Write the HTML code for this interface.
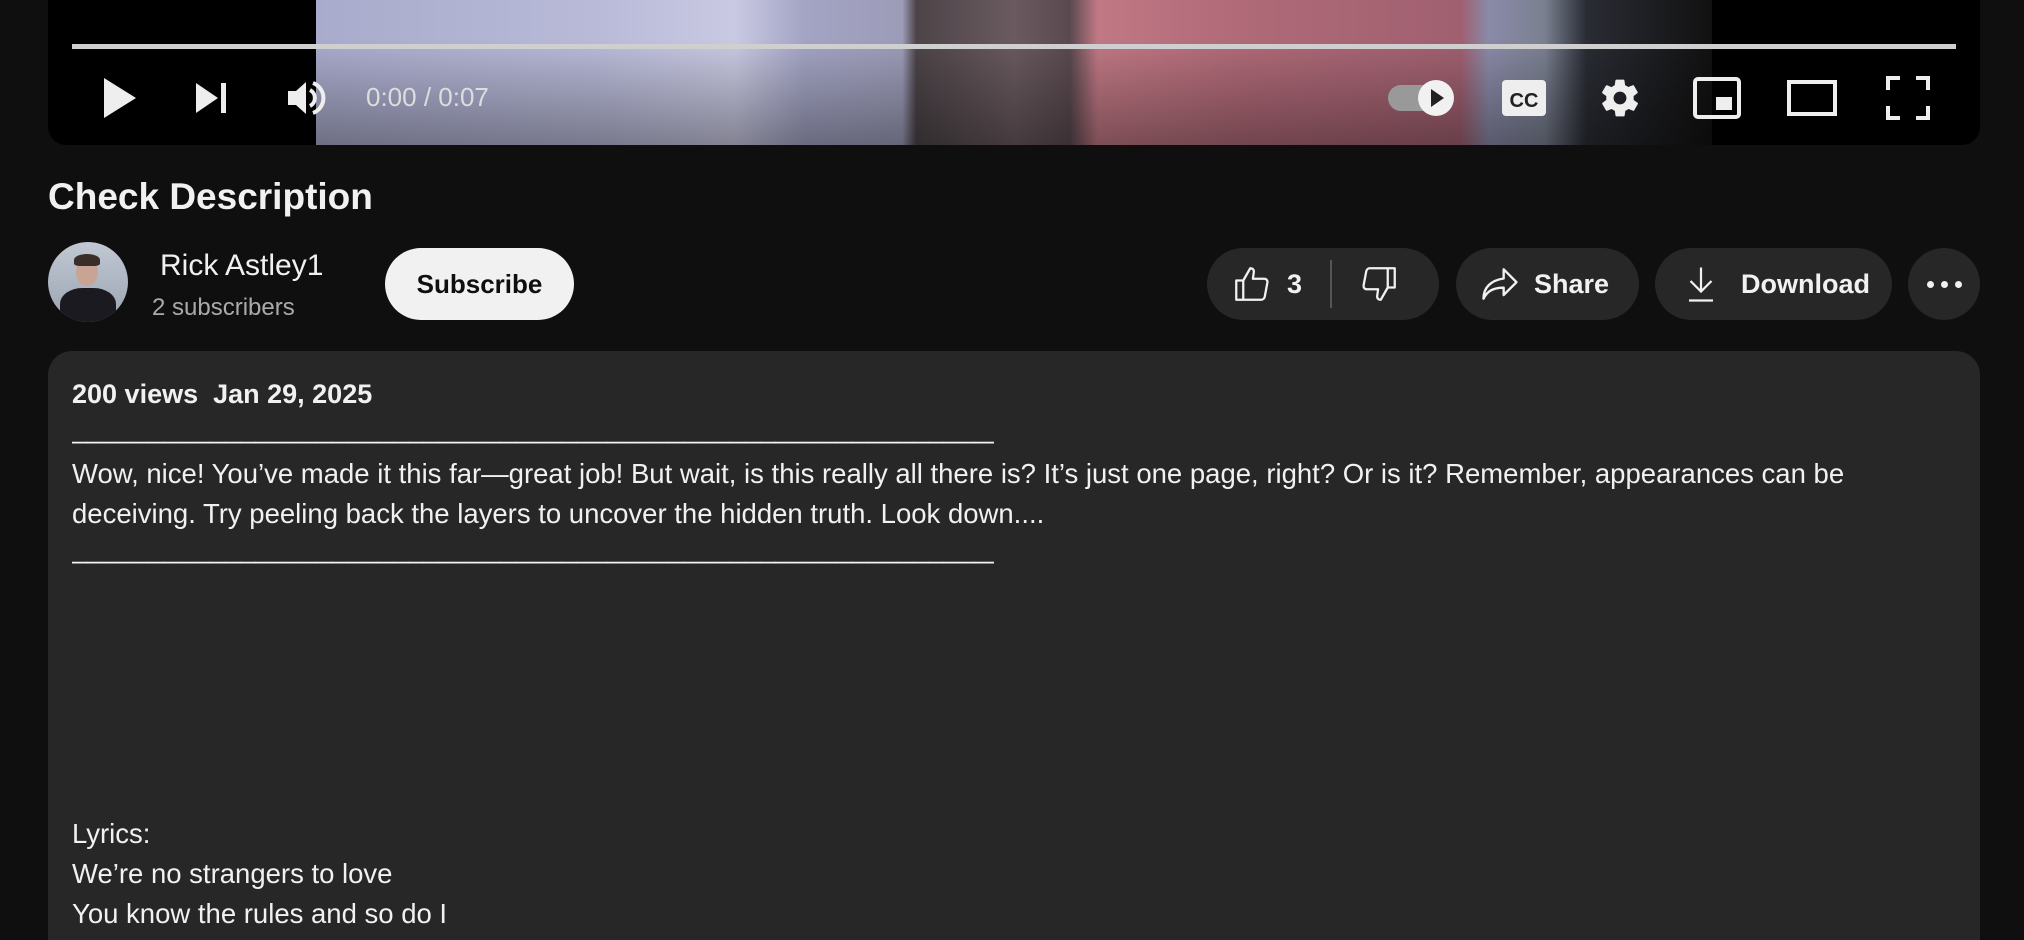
<!DOCTYPE html>
<html style="width:2024px;height:940px;overflow:hidden"><head><meta charset="utf-8"><style>
*{margin:0;padding:0;box-sizing:border-box}
body{width:2024px;height:940px;background:#0f0f0f;overflow:hidden;font-family:"Liberation Sans",Arial,sans-serif;color:#f1f1f1;position:relative}
.abs{position:absolute}
.player{left:48px;top:-20px;width:1932px;height:165px;background:#000;border-radius:0 0 18px 18px;overflow:hidden}
.btn{background:#272727;border-radius:36px;height:72px;top:248px;display:flex;align-items:center;font-size:27px;font-weight:bold}
.desc{left:48px;top:351px;width:1932px;height:589px;background:#272727;border-radius:24px 24px 0 0;padding:23px 24px;font-size:27.5px;line-height:40px;white-space:nowrap;overflow:hidden}
.us{display:block;width:922px;overflow:hidden;height:40px;position:relative;top:-5px}
</style></head><body>
<div class="abs player">
  <div class="abs" style="left:268px;top:0;width:1396px;height:165px;background:linear-gradient(90deg,#a9abcc 0%,#b8bad8 20%,#c9c9e2 30%,#a3a4c4 35%,#9c9cb8 42%,#4c4448 43%,#6a5a60 50%,#5a4a50 54%,#c07884 56%,#b06a78 66%,#a06070 82%,#8a8aa8 84%,#7a8090 88%,#2a2c34 91%,#111 100%)"></div>
  <div class="abs" style="left:268px;top:60px;width:1396px;height:105px;background:linear-gradient(180deg,rgba(0,0,0,0),rgba(0,0,0,.35))"></div>
  <div class="abs" style="left:24px;top:64px;width:1884px;height:5px;background:#cfcfcf"></div>
</div>
<svg class="abs" style="left:100px;top:76px" width="40" height="44" viewBox="0 0 40 44"><path d="M4 2 L36 22 L4 42Z" fill="#eee"/></svg>
<svg class="abs" style="left:194px;top:82px" width="36" height="32" viewBox="0 0 36 32"><path d="M2 1 L24 16 L2 31Z" fill="#eee"/><rect x="27" y="1" width="5" height="30" fill="#eee"/></svg>
<svg class="abs" style="left:286px;top:78px" width="40" height="40" viewBox="0 0 40 40"><path d="M2 13 H10 L20 4 V36 L10 27 H2Z" fill="#eee"/><path d="M24 12 A9 9 0 0 1 24 28" stroke="#eee" stroke-width="4" fill="none"/><path d="M27 5 A16 16 0 0 1 27 35" stroke="#eee" stroke-width="4" fill="none"/></svg>
<div class="abs" style="left:366px;top:82px;font-size:26px;color:#ddd">0:00 / 0:07</div>
<svg class="abs" style="left:1386px;top:78px" width="72" height="40" viewBox="0 0 72 40"><rect x="2" y="7" width="50" height="26" rx="13" fill="#999"/><circle cx="50" cy="20" r="18" fill="#f1f1f1"/><path d="M45 11 L58 20 L45 29Z" fill="#222"/></svg>
<svg class="abs" style="left:1500px;top:78px" width="48" height="40" viewBox="0 0 48 40"><rect x="2" y="2" width="44" height="36" rx="4" fill="#eee"/><text x="24" y="29" font-family="Liberation Sans" font-weight="bold" font-size="20" fill="#222" text-anchor="middle">CC</text></svg>
<svg class="abs" style="left:1598px;top:76px" width="44" height="44" viewBox="0 0 24 24"><path fill="#eee" d="M19.4 13c.04-.33.06-.66.06-1s-.02-.67-.06-1l2.1-1.650c.2-.15.24-.42.12-.64l-2-3.46c-.12-.22-.39-.3-.61-.22l-2.49 1a7.300 7.300 0 0 0-1.730-1l-.38-2.650A.5.5 0 0 0 14 2h-4a.5.5 0 0 0-.49.42l-.38 2.650c-.63.26-1.2.6-1.730 1l-2.490-1c-.23-.09-.49 0-.61.22l-2 3.460c-.13.22-.07.49.12.64L4.570 11c-.04.33-.07.67-.07 1s.03.67.07 1l-2.110 1.650c-.19.15-.24.42-.12.64l2 3.460c.12.22.39.3.61.22l2.490-1c.52.4 1.1.74 1.730 1l.38 2.650c.03.24.24.42.49.42h4c.25 0 .46-.18.49-.42l.38-2.650c.63-.26 1.2-.6 1.730-1l2.490 1c.23.09.49 0 .61-.22l2-3.460c.12-.22.07-.49-.12-.64zM12 15.5A3.5 3.5 0 1 1 12 8.5a3.5 3.5 0 0 1 0 7z"/></svg>
<svg class="abs" style="left:1692px;top:76px" width="50" height="44" viewBox="0 0 50 44"><rect x="3" y="3" width="44" height="38" rx="3" stroke="#eee" stroke-width="4" fill="none"/><rect x="24" y="21" width="16" height="13" fill="#eee"/></svg>
<svg class="abs" style="left:1786px;top:78px" width="52" height="40" viewBox="0 0 52 40"><rect x="3" y="4" width="46" height="32" stroke="#eee" stroke-width="4" fill="none"/></svg>
<svg class="abs" style="left:1886px;top:76px" width="44" height="44" viewBox="0 0 44 44"><path d="M2 14 V2 H14 M30 2 H42 V14 M42 30 V42 H30 M14 42 H2 V30" stroke="#eee" stroke-width="4" fill="none"/></svg>

<div class="abs" style="left:48px;top:176px;font-size:37px;font-weight:bold">Check Description</div>
<div class="abs" style="left:48px;top:242px;width:80px;height:80px;border-radius:50%;overflow:hidden;background:linear-gradient(180deg,#c0c8d4,#9aa4b0)">
  <div class="abs" style="left:28px;top:16px;width:22px;height:28px;border-radius:50%;background:#c9a393"></div>
  <div class="abs" style="left:26px;top:12px;width:26px;height:12px;border-radius:50% 50% 20% 20%;background:#3a2e28"></div>
  <div class="abs" style="left:12px;top:46px;width:56px;height:40px;border-radius:40% 40% 0 0;background:#1a1a20"></div>
</div>
<div class="abs" style="left:160px;top:249px;font-size:30px">Rick Astley1</div>
<div class="abs" style="left:152px;top:294px;font-size:24px;color:#aaa">2 subscribers</div>
<div class="abs" style="left:385px;top:248px;width:189px;height:72px;border-radius:36px;background:#f1f1f1;color:#0f0f0f;font-size:26px;font-weight:bold;display:flex;align-items:center;justify-content:center">Subscribe</div>

<div class="abs btn" style="left:1207px;width:232px">
 <svg style="margin-left:24px" width="42" height="42" viewBox="0 0 24 24"><path d="M3 10h4v11H3zM7 10l4-7c1.5 0 2.3 1 2 2.5L12.5 9H19c1.2 0 2 1 1.8 2.2l-1.5 8c-.2 1-1 1.8-2 1.8H7" stroke="#f1f1f1" stroke-width="1.3" fill="none" stroke-linejoin="round"/></svg>
 <span style="margin-left:14px">3</span>
 <div style="width:2px;height:48px;background:#555;margin-left:28px"></div>
 <svg style="margin-left:26px" width="42" height="42" viewBox="0 0 24 24"><path d="M17 3h4v11h-4zM17 14l-4 7c-1.5 0-2.3-1-2-2.5l.5-3.5H5c-1.2 0-2-1-1.8-2.2l1.5-8C4.9 3.8 5.7 3 6.7 3H17" stroke="#f1f1f1" stroke-width="1.3" fill="none" stroke-linejoin="round"/></svg>
</div>
<div class="abs btn" style="left:1456px;width:183px">
 <svg style="margin-left:22px" width="44" height="44" viewBox="0 0 24 24"><path d="M14 4l7 7-7 7v-4C8 14 5 16 3 20c0-6 4-10 11-11z" stroke="#f1f1f1" stroke-width="1.3" fill="none" stroke-linejoin="round"/></svg>
 <span style="margin-left:12px">Share</span>
</div>
<div class="abs btn" style="left:1655px;width:237px">
 <svg style="margin-left:28px" width="36" height="40" viewBox="0 0 24 26"><path d="M12 2v16M5 11l7 7 7-7M4 24h16" stroke="#f1f1f1" stroke-width="1.5" fill="none"/></svg>
 <span style="margin-left:22px">Download</span>
</div>
<div class="abs btn" style="left:1908px;width:72px;justify-content:center;gap:7px">
 <i style="width:7px;height:7px;border-radius:50%;background:#f1f1f1"></i><i style="width:7px;height:7px;border-radius:50%;background:#f1f1f1"></i><i style="width:7px;height:7px;border-radius:50%;background:#f1f1f1"></i>
</div>

<div class="abs desc">
<div style="font-weight:bold;font-size:27px">200 views&nbsp; Jan 29, 2025</div>
<span class="us">______________________________________________________________________________________________</span>
Wow, nice! You’ve made it this far—great job! But wait, is this really all there is? It’s just one page, right? Or is it? Remember, appearances can be<br>
deceiving. Try peeling back the layers to uncover the hidden truth. Look down....<br>
<span class="us">______________________________________________________________________________________________</span>
<br><br><br><br><br><br>
Lyrics:<br>
We’re no strangers to love<br>
You know the rules and so do I
</div>
</body></html>
